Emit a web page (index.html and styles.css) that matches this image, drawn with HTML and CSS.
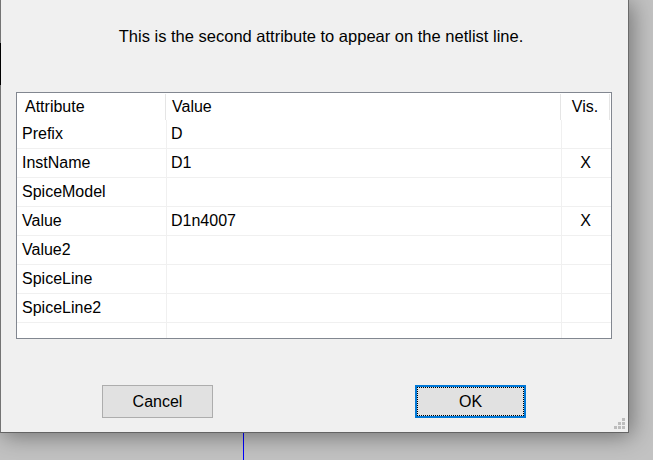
FILE: index.html
```html
<!DOCTYPE html>
<html>
<head>
<meta charset="utf-8">
<link rel="stylesheet" href="styles.css">
</head>
<body>
<div class="screen">
  <div class="backline"></div>
  <div class="dialog">
    <div class="edgemark"></div>
    <p class="desc">This is the second attribute to appear on the netlist line.</p>
    <div class="list">
      <div class="head">
        <div class="hcell c-attr">Attribute</div>
        <div class="hcell c-val">Value</div>
        <div class="hcell c-vis">Vis.</div>
        <div class="hfill"></div>
      </div>
      <div class="row"><div class="cell attr">Prefix</div><div class="cell val">D</div><div class="cell vis"></div></div>
      <div class="row"><div class="cell attr">InstName</div><div class="cell val">D1</div><div class="cell vis">X</div></div>
      <div class="row"><div class="cell attr">SpiceModel</div><div class="cell val"></div><div class="cell vis"></div></div>
      <div class="row"><div class="cell attr">Value</div><div class="cell val">D1n4007</div><div class="cell vis">X</div></div>
      <div class="row"><div class="cell attr">Value2</div><div class="cell val"></div><div class="cell vis"></div></div>
      <div class="row"><div class="cell attr">SpiceLine</div><div class="cell val"></div><div class="cell vis"></div></div>
      <div class="row"><div class="cell attr">SpiceLine2</div><div class="cell val"></div><div class="cell vis"></div></div>
      <div class="row last"><div class="cell attr"></div><div class="cell val"></div><div class="cell vis"></div></div>
    </div>
    <div class="buttons">
      <button class="btn">Cancel</button>
      <button class="btn default">OK</button>
    </div>
    <svg class="grip" width="11" height="11" viewBox="0 0 11 11">
      <rect x="8" y="0" width="3" height="3" fill="#bdbdbd"/>
      <rect x="4" y="4" width="3" height="3" fill="#bdbdbd"/>
      <rect x="8" y="4" width="3" height="3" fill="#bdbdbd"/>
      <rect x="0" y="8" width="3" height="3" fill="#bdbdbd"/>
      <rect x="4" y="8" width="3" height="3" fill="#bdbdbd"/>
      <rect x="8" y="8" width="3" height="3" fill="#bdbdbd"/>
    </svg>
  </div>
</div>
</body>
</html>
```
FILE: styles.css
```css
* { box-sizing: border-box; }
html, body { margin: 0; padding: 0; }
body {
  background: #c2c2c2;
  font-family: "Liberation Sans", Arial, sans-serif;
  font-size: 16px;
  color: #000;
  overflow: hidden;
}
.screen {
  position: relative;
  width: 653px;
  height: 460px;
  overflow: hidden;
}
.backline {
  position: absolute;
  left: 243px;
  top: 420px;
  width: 1px;
  height: 40px;
  background: #0000ff;
}
.dialog {
  position: relative;
  width: 629px;
  height: 433px;
  background: #f0f0f0;
  border-left: 1px solid #747474;
  border-right: 1px solid #6a6a6a;
  border-bottom: 1px solid #646464;
  box-shadow: 3px 3px 22px rgba(0, 0, 0, 0.42);
  display: flex;
  flex-direction: column;
}
.edgemark {
  position: absolute;
  left: -1px;
  top: 43px;
  width: 1px;
  height: 42px;
  background: #000;
}
.desc {
  margin: 26px 0 0 0;
  padding-left: 13px;
  text-align: center;
  font-size: 16.5px;
  line-height: 20px;
  height: 20px;
}
.list {
  margin: 46px 0 0 15px;
  width: 596px;
  height: 247px;
  border: 1px solid #828790;
  background: #fff;
  display: flex;
  flex-direction: column;
}
.head {
  display: grid;
  grid-template-columns: 149px 395px 49px 1fr;
  height: 27px;
  padding-top: 1px;
}
.hcell {
  border-right: 1px solid #e5e5e5;
  line-height: 25px;
  white-space: nowrap;
}
.c-attr { padding-left: 8px; }
.c-val { padding-left: 6px; }
.c-vis { text-align: center; }
.row {
  display: grid;
  grid-template-columns: 150px 395px 1fr;
  height: 29px;
  border-bottom: 1px solid #f0f0f0;
}
.row.last {
  flex: 1;
  border-bottom: none;
}
.cell {
  line-height: 28px;
  white-space: nowrap;
}
.attr { padding-left: 5px; border-right: 1px solid #f0f0f0; }
.val { padding-left: 4px; border-right: 1px solid #f0f0f0; }
.vis { text-align: center; padding-right: 2px; }
.buttons {
  display: flex;
  gap: 202px;
  margin: 46px 0 0 101px;
}
.btn {
  width: 111px;
  height: 33px;
  background: #e1e1e1;
  border: 1px solid #adadad;
  font-family: "Liberation Sans", Arial, sans-serif;
  font-size: 16px;
  color: #000;
  padding: 0;
  margin: 0;
}
.btn.default {
  border: 2px solid #0078d7;
  outline: 1px dotted #000;
  outline-offset: -3px;
}
.grip {
  position: absolute;
  right: 3px;
  bottom: 3px;
}
```
